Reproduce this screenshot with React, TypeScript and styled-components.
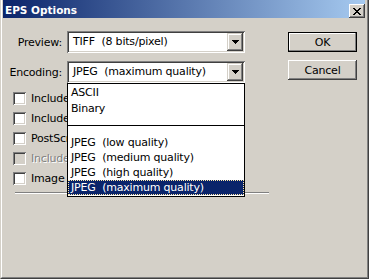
import React from "react";
import styled, { createGlobalStyle } from "styled-components";

const GlobalStyle = createGlobalStyle`
  html, body { margin: 0; padding: 0; background: #d4d0c8; }
  body {
    font-family: "DejaVu Sans", "Liberation Sans", sans-serif;
    font-size: 11px;
    color: #000;
  }
  * { box-sizing: border-box; }
`;

const Window = styled.div`
  width: 369px;
  height: 279px;
  background: #d4d0c8;
  border-left: 1px solid #d4d0c8;
  border-right: 1px solid #404040;
  border-bottom: 1px solid #404040;
  display: flex;
`;

const Frame = styled.div`
  flex: 1;
  display: flex;
  flex-direction: column;
  border-left: 1px solid #ffffff;
  border-right: 1px solid #808080;
  border-bottom: 1px solid #808080;
  padding: 0 2px 0 1px;
`;

const TitleBar = styled.div`
  height: 18px;
  flex: none;
  display: flex;
  align-items: flex-start;
  padding-left: 2px;
  background: linear-gradient(to right, #0a246a, #a6caf0);
`;

const Title = styled.div`
  flex: 1;
  color: #fff;
  font-weight: bold;
  font-size: 10.5px;
  line-height: 13px;
  padding-top: 4px;
  white-space: nowrap;
`;

const CloseButton = styled.button`
  width: 16px;
  height: 14px;
  margin-top: 4px;
  padding: 0;
  border: none;
  background: #d4d0c8;
  box-shadow: inset -1px -1px #404040, inset 1px 1px #ffffff,
    inset -2px -2px #808080, inset 2px 2px #d4d0c8;
  display: flex;
  align-items: center;
  justify-content: center;
`;

const Body = styled.div`
  flex: 1;
  position: relative;
  display: flex;
`;

const Main = styled.div`
  display: flex;
  flex-direction: column;
  padding-top: 13px;
`;

const FieldGrid = styled.div`
  display: grid;
  grid-template-columns: 59px 178px;
  column-gap: 5px;
  row-gap: 8px;
  align-items: center;
`;

const FieldLabel = styled.label`
  text-align: right;
  white-space: nowrap;
  letter-spacing: -0.2px;
`;

const Combo = styled.div`
  width: 178px;
  height: 22px;
  padding: 2px;
  background: #fff;
  display: flex;
  align-items: stretch;
  box-shadow: inset 1px 1px #808080, inset -1px -1px #ffffff,
    inset 2px 2px #404040, inset -2px -2px #d4d0c8;
`;

const ComboValue = styled.div`
  flex: 1;
  padding-left: 4px;
  line-height: 18px;
  white-space: pre;
  letter-spacing: -0.2px;
  overflow: hidden;
`;

const ComboButton = styled.div`
  width: 16px;
  height: 18px;
  background: #d4d0c8;
  display: flex;
  align-items: center;
  justify-content: center;
  box-shadow: inset -1px -1px #404040, inset 1px 1px #d4d0c8,
    inset -2px -2px #808080, inset 2px 2px #ffffff;
`;

const CheckList = styled.div`
  display: flex;
  flex-direction: column;
  margin-top: 6px;
  padding-left: 10px;
`;

const CheckRow = styled.div`
  height: 20px;
  display: flex;
  align-items: flex-start;
  gap: 5px;
`;

const CheckBox = styled.span<{ $disabled?: boolean }>`
  width: 13px;
  height: 13px;
  margin-top: 3px;
  flex: none;
  background: ${(p) => (p.$disabled ? "#d4d0c8" : "#ffffff")};
  box-shadow: inset 1px 1px #808080, inset -1px -1px #ffffff,
    inset 2px 2px #404040, inset -2px -2px #d4d0c8;
`;

const CheckLabel = styled.span<{ $disabled?: boolean }>`
  line-height: 20px;
  white-space: nowrap;
  letter-spacing: -0.2px;
  color: ${(p) => (p.$disabled ? "#808080" : "#000")};
  text-shadow: ${(p) => (p.$disabled ? "1px 1px 0 #ffffff" : "none")};
`;

const Separator = styled.div`
  width: 254px;
  height: 2px;
  margin: 3px 0 0 12px;
  border-top: 1px solid #808080;
  border-bottom: 1px solid #ffffff;
`;

const ButtonColumn = styled.div`
  margin-left: auto;
  padding: 14px 8px 0 0;
  display: flex;
  flex-direction: column;
  gap: 8px;
`;

const PushButton = styled.button<{ $default?: boolean }>`
  width: 69px;
  height: 20px;
  padding: 0;
  font: inherit;
  letter-spacing: -0.2px;
  color: #000;
  background: #d4d0c8;
  border: ${(p) => (p.$default ? "1px solid #000" : "none")};
  box-shadow: ${(p) =>
    p.$default
      ? "inset -1px -1px #808080, inset 1px 1px #ffffff"
      : "inset -1px -1px #404040, inset 1px 1px #ffffff, inset -2px -2px #808080, inset 2px 2px #d4d0c8"};
`;

/* the open drop-down list of the Encoding combo, lying over the check boxes */
const DropList = styled.div`
  position: absolute;
  left: 64px;
  top: 65px;
  width: 178px;
  height: 114px;
  border: 1px solid #000;
  background: #fff;
  padding: 1px 0;
  display: flex;
  flex-direction: column;
  z-index: 2;
`;

const ListItem = styled.div<{ $h: number; $selected?: boolean }>`
  height: ${(p) => p.$h}px;
  line-height: ${(p) => p.$h}px;
  padding-left: 3px;
  white-space: pre;
  letter-spacing: -0.2px;
  color: ${(p) => (p.$selected ? "#fff" : "#000")};
  background: ${(p) => (p.$selected ? "#0a246a" : "transparent")};
  outline: ${(p) => (p.$selected ? "1px dotted #ffe9a8" : "none")};
  outline-offset: -1px;
`;

const ListGap = styled.div<{ $h: number }>`
  height: ${(p) => p.$h}px;
  flex: none;
`;

const ListRule = styled.div`
  height: 1px;
  flex: none;
  background: #000;
`;

const Arrow = () => (
  <svg width="7" height="4" viewBox="0 0 7 4" shapeRendering="crispEdges">
    <path d="M0 0h7v1h-1v1h-1v1h-1v1h-1v-1h-1v-1h-1v-1h-1z" fill="#000" />
  </svg>
);

const CloseGlyph = () => (
  <svg width="8" height="7" viewBox="0 0 8 7" shapeRendering="crispEdges">
    <path
      d="M0 0h2v1h1v1h2v-1h1v-1h2v1h-1v1h-1v1h-1v1h1v1h1v1h1v1h-2v-1h-1v-1h-2v1h-1v1h-2v-1h1v-1h1v-1h1v-1h-1v-1h-1v-1h-1z"
      fill="#000"
    />
  </svg>
);

const checks = [
  { label: "Include Halftone Screen" },
  { label: "Include Transfer Function" },
  { label: "PostScript Color Management" },
  { label: "Include Vector Data", disabled: true },
  { label: "Image Interpolation" },
];

export default function App() {
  return (
    <>
      <GlobalStyle />
      <Window>
        <Frame>
          <TitleBar>
            <Title>EPS Options</Title>
            <CloseButton aria-label="Close">
              <CloseGlyph />
            </CloseButton>
          </TitleBar>
          <Body>
            <Main>
              <FieldGrid>
                <FieldLabel>Preview:</FieldLabel>
                <Combo>
                  <ComboValue>TIFF  (8 bits/pixel)</ComboValue>
                  <ComboButton>
                    <Arrow />
                  </ComboButton>
                </Combo>
                <FieldLabel>Encoding:</FieldLabel>
                <Combo>
                  <ComboValue>JPEG  (maximum quality)</ComboValue>
                  <ComboButton>
                    <Arrow />
                  </ComboButton>
                </Combo>
              </FieldGrid>
              <CheckList>
                {checks.map((c) => (
                  <CheckRow key={c.label}>
                    <CheckBox $disabled={c.disabled} />
                    <CheckLabel $disabled={c.disabled}>{c.label}</CheckLabel>
                  </CheckRow>
                ))}
              </CheckList>
              <Separator />
            </Main>
            <ButtonColumn>
              <PushButton $default>OK</PushButton>
              <PushButton>Cancel</PushButton>
            </ButtonColumn>
            <DropList>
              <ListItem $h={16}>ASCII</ListItem>
              <ListItem $h={16}>Binary</ListItem>
              <ListGap $h={8} />
              <ListRule />
              <ListGap $h={9} />
              <ListItem $h={15}>JPEG  (low quality)</ListItem>
              <ListItem $h={15}>JPEG  (medium quality)</ListItem>
              <ListItem $h={15}>JPEG  (high quality)</ListItem>
              <ListItem $h={15} $selected>
                JPEG  (maximum quality)
              </ListItem>
            </DropList>
          </Body>
        </Frame>
      </Window>
    </>
  );
}
